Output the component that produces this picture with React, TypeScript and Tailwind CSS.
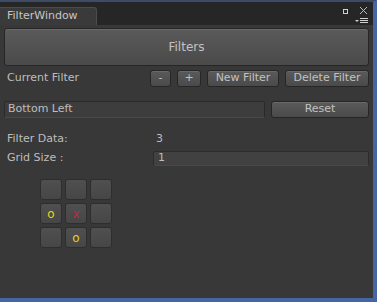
import React from "react";

const font = { fontFamily: '"DejaVu Sans", Verdana, sans-serif' };

const Btn = ({ label, className }: { label: string; className: string }) => (
  <div
    className={`flex items-center justify-center rounded-[3px] border border-[#262626] bg-gradient-to-b from-[#5a5a5a] to-[#4a4a4a] text-[11px] text-[#c2c2c2] shadow-[inset_0_1px_0_#6a6a6a] ${className}`}
  >
    {label}
  </div>
);

const cells = ["", "", "", "o", "x", "", "", "o", ""];

export default function App() {
  return (
    <div
      className="w-[377px] h-[302px] flex flex-col bg-[#2a3a5c] border-t-2 border-t-[#3e4b66] border-r-[4px] border-r-[#4565a4] border-b-[4px] border-b-[#4565a4] overflow-hidden"
      style={font}
    >
      {/* header */}
      <div className="h-[23px] shrink-0 bg-[#262626] flex items-end relative">
        <div className="h-[18px] w-[97px] bg-[#3a3a3a] border-t border-r border-[#4c4c4c] rounded-tr-[3px] flex items-center pl-[7px] text-[11px] text-[#c6c6c6]">
          FilterWindow
        </div>
        <div className="absolute right-[25px] top-[7px] w-[5px] h-[5px] border border-[#cfcfcf]" />
        <svg className="absolute right-[5px] top-[4px]" width="9" height="9" viewBox="0 0 9 9">
          <path d="M1 1L8 8M8 1L1 8" stroke="#bdbdbd" strokeWidth="1" />
        </svg>
        <svg className="absolute right-[4px] top-[16px]" width="14" height="6" viewBox="0 0 14 6">
          <path d="M0 2h4L2 4z" fill="#d0d0d0" />
          <path d="M5 0.5h8M5 2.5h8M5 4.5h8" stroke="#d0d0d0" strokeWidth="1" />
        </svg>
      </div>

      {/* body */}
      <div className="flex-1 bg-[#383838] flex flex-col px-[4px] pt-[3px] text-[11px] text-[#bdbdbd]">
        <Btn label="Filters" className="h-[38px] text-[12px]" />

        <div className="mt-[4px] h-[17px] flex items-center">
          <span className="pl-[3px] flex-1">Current Filter</span>
          <Btn label="-" className="w-[21px] h-[17px]" />
          <Btn label="+" className="ml-[6px] w-[24px] h-[17px]" />
          <Btn label="New Filter" className="ml-[6px] w-[72px] h-[17px]" />
          <Btn label="Delete Filter" className="ml-[6px] w-[84px] h-[17px]" />
        </div>

        <div className="mt-[14px] h-[17px] flex items-center">
          <div className="w-[261px] h-[17px] bg-[#3d3d3d] border border-[#2a2a2a] border-b-[#4a4a4a] rounded-[2px] flex items-center pl-[3px]">
            Bottom Left
          </div>
          <Btn label="Reset" className="ml-[6px] flex-1 h-[17px]" />
        </div>

        <div className="mt-[13px] h-[16px] flex items-center">
          <span className="pl-[3px] w-[152px]">Filter Data:</span>
          <span>3</span>
        </div>
        <div className="mt-[3px] h-[16px] flex items-center">
          <span className="pl-[3px] w-[149px]">Grid Size :</span>
          <div className="flex-1 h-[15px] bg-[#414141] border border-[#2c2c2c] border-b-[#484848] rounded-[2px] flex items-center pl-[4px]">
            1
          </div>
        </div>

        <div className="mt-[13px] ml-[36px] grid grid-cols-[22px_22px_22px] grid-rows-[21px_21px_21px] gap-[3px] w-fit">
          {cells.map((c, i) => (
            <div
              key={i}
              className="rounded-[3px] bg-gradient-to-b from-[#505050] to-[#464646] border border-[#2e2e2e] flex items-center justify-center text-[12px] leading-none"
            >
              {c === "o" && <span className="text-[#e6d21a]">o</span>}
              {c === "x" && <span className="text-[#c2283a]">x</span>}
            </div>
          ))}
        </div>
      </div>
    </div>
  );
}
